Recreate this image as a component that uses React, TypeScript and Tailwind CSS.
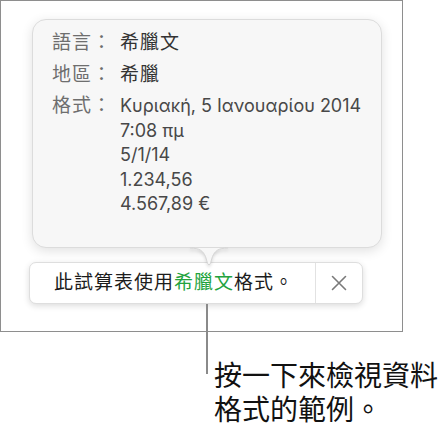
const font = { fontFamily: 'Inter, "Noto Sans CJK TC", sans-serif' }

function Row({ label, children, className = '' }: { label: string; children: React.ReactNode; className?: string }) {
  return (
    <div className={`grid grid-cols-[68px_1fr] ${className}`}>
      <div className="text-[19px] leading-[24px] text-[#6e6e6e] tracking-[1px]">{label}</div>
      <div>{children}</div>
    </div>
  )
}

export default function App() {
  return (
    <div className="relative w-[446px] h-[430px] bg-white" style={font}>
      {/* screenshot frame */}
      <div className="relative w-[403px] h-[332px] border border-[#8e8e8e] bg-white">
        {/* popover */}
        <div className="relative ml-[31px] mt-[18px] w-[350px] h-[229px] rounded-[14px] bg-[#f7f7f7] border border-[#dcdcdc] shadow-[0_3px_12px_rgba(0,0,0,0.12)] pt-[11px] pl-[19px]">
          <Row label="語言：">
            <span className="text-[19px] leading-[24px] text-[#333] tracking-[1px]">希臘文</span>
          </Row>
          <Row label="地區：" className="mt-[8px]">
            <span className="text-[19px] leading-[24px] text-[#333] tracking-[1px]">希臘</span>
          </Row>
          <Row label="格式：" className="mt-[7px]">
            <div className="text-[18px] leading-[24.5px] text-[#484848]">
              <div>Κυριακή, 5 Ιανουαρίου 2014</div>
              <div>7:08 πμ</div>
              <div>5/1/14</div>
              <div>1.234,56</div>
              <div>4.567,89 €</div>
            </div>
          </Row>
          {/* arrow */}
          <svg
            className="absolute left-[157px] top-[227px] drop-shadow-[0_2px_1.5px_rgba(0,0,0,0.12)]"
            width="38"
            height="21"
            viewBox="0 0 38 21"
          >
            <path
              d="M0 1 C10 1 13 4 15.5 9.5 L17.6 16.5 Q19 19.5 20.4 16.5 L22.5 9.5 C25 4 28 1 38 1 Z"
              fill="#f7f7f7"
            />
            <path
              d="M0 1 C10 1 13 4 15.5 9.5 L17.6 16.5 Q19 19.5 20.4 16.5 L22.5 9.5 C25 4 28 1 38 1"
              fill="none"
              stroke="#d4d4d4"
              strokeWidth="1"
            />
          </svg>
        </div>

        {/* info bar */}
        <div className="ml-[28px] mt-[14px] w-[334px] h-[42px] flex rounded-[7px] bg-white border border-[#dedede] shadow-[0_2px_6px_rgba(0,0,0,0.14)]">
          <div className="flex-1 flex items-center pl-[24px] text-[19px] tracking-[1px] text-[#1c1c1c]">
            此試算表使用<span className="text-[#22a33d]">希臘文</span>格式。
          </div>
          <div className="w-px bg-[#e2e2e2]" />
          <div className="w-[46px] flex items-center justify-center">
            <svg width="16" height="16" viewBox="0 0 16 16">
              <path d="M1.5 1.5 L14.5 14.5 M14.5 1.5 L1.5 14.5" stroke="#7a7a7a" strokeWidth="1.6" strokeLinecap="round" />
            </svg>
          </div>
        </div>
      </div>

      {/* leader line */}
      <div className="absolute left-[206px] top-[304px] w-[2px] h-[70px] bg-[#8a8a8a]" />

      {/* callout */}
      <div className="ml-[214px] mt-[27px] text-[28px] leading-[34px] text-[#111]">
        <div>按一下來檢視資料</div>
        <div>格式的範例。</div>
      </div>
    </div>
  )
}
